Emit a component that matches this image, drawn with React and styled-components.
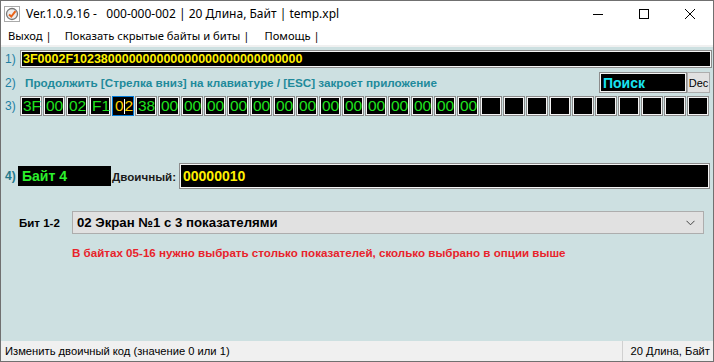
import React from 'react'
import styled, { createGlobalStyle } from 'styled-components'

const GlobalStyle = createGlobalStyle`
  html, body { margin: 0; padding: 0; background: #fff; }
  body { font-family: "Liberation Sans", Arial, sans-serif; }
  * { box-sizing: border-box; }
`

const Window = styled.div`
  width: 714px;
  height: 362px;
  border: 1px solid #707070;
  display: flex;
  flex-direction: column;
  background: #fff;
  overflow: hidden;
`

const TitleBar = styled.div`
  height: 25px;
  display: flex;
  align-items: center;
  background: #fff;
  font-family: "Noto Sans", "Open Sans", sans-serif;
  font-size: 12px;
  color: #000;
`

const AppIcon = styled.div`
  width: 16px;
  height: 16px;
  margin: 0 6px 0 3px;
  display: flex;
`

const Title = styled.div`
  flex: 1;
  white-space: pre;
`

const WinButton = styled.div`
  width: 46px;
  height: 25px;
  display: flex;
  align-items: center;
  justify-content: center;
`

const MenuBar = styled.div`
  height: 19px;
  display: flex;
  align-items: center;
  padding-left: 1px;
  font-family: "Noto Sans", "Open Sans", sans-serif;
  font-size: 11.2px;
`

const MenuItem = styled.div`
  padding: 0 ${p => p.$gap}px 0 6px;
  white-space: pre;
`

const Strip = styled.div`
  height: 2px;
  background: #f0f0f0;
`

const Client = styled.div`
  flex: 1;
  background: #cde0e1;
  display: flex;
  flex-direction: column;
  padding-left: 4px;
`

const Row = styled.div`
  display: flex;
  align-items: center;
  margin-top: ${p => p.$top}px;
  padding-right: ${p => p.$right ?? 3}px;
`

const Num = styled.div`
  width: ${p => p.$w || 15}px;
  flex: none;
  font-size: 12px;
  font-weight: ${p => (p.$bold ? 700 : 400)};
  color: ${p => p.$color || '#1d7fa3'};
`

const Sunken = styled.div`
  background: #000;
  border: 1px solid #8c8c8c;
  box-shadow: inset 0 0 0 1px #f4f4f4;
  display: flex;
  align-items: center;
`

const HexField = styled(Sunken)`
  flex: 1;
  height: 18px;
  padding-left: 2px;
  color: #fff000;
  font-weight: 700;
  font-size: 12.5px;
`

const Hint = styled.div`
  flex: 1;
  padding-left: 5px;
  color: #1f8a9b;
  font-weight: 700;
  font-size: 11.7px;
`

const SearchBox = styled(Sunken)`
  width: 88px;
  height: 21px;
  padding-left: 3px;
  color: #19e4f2;
  font-weight: 700;
  font-size: 14px;
`

const DecButton = styled.div`
  width: 23px;
  height: 21px;
  background: #e1e1e1;
  border: 1px solid #adadad;
  display: flex;
  align-items: center;
  justify-content: center;
  font-size: 11px;
  color: #000;
`

const ByteGrid = styled.div`
  flex: 1;
  display: grid;
  grid-template-columns: repeat(30, 22px);
  gap: 1px;
`

const ByteCell = styled(Sunken)`
  height: 20px;
  padding-left: 2px;
  font-family: "Liberation Sans Narrow", "Liberation Sans", sans-serif;
  font-size: 15.5px;
  color: ${p => (p.$focused ? '#ffd200' : '#1fe21f')};
  border-color: ${p => (p.$focused ? '#0078d7' : '#8c8c8c')};
  box-shadow: ${p => (p.$focused ? 'none' : 'inset 0 0 0 1px #f4f4f4')};
`

const Caret = styled.span`
  display: inline-block;
  width: 1px;
  height: 15px;
  background: #fff;
  vertical-align: middle;
`

const ByteTag = styled.div`
  width: 93px;
  height: 20px;
  background: #000;
  color: #2cf02c;
  font-weight: 700;
  font-size: 14px;
  padding-left: 4px;
  display: flex;
  align-items: center;
`

const FieldLabel = styled.div`
  width: 68px;
  padding-left: 1px;
  font-weight: 700;
  font-size: 11.6px;
  color: #1a1a1a;
`

const BinaryField = styled(Sunken)`
  flex: 1;
  height: 26px;
  padding-left: 3px;
  color: #fff000;
  font-weight: 700;
  font-size: 14px;
`

const BitLabel = styled.div`
  width: 67px;
  padding-left: 14px;
  font-weight: 700;
  font-size: 11.5px;
  white-space: nowrap;
  color: #000;
`

const Select = styled.div`
  flex: 1;
  height: 23px;
  background: #e1e1e1;
  border: 1px solid #adadad;
  display: flex;
  align-items: center;
  justify-content: space-between;
  padding: 0 8px 0 4px;
  font-weight: 700;
  font-size: 13.2px;
  color: #000;
`

const Warning = styled.div`
  margin-top: 12px;
  padding-left: 67px;
  color: #e8232b;
  font-weight: 700;
  font-size: 11.6px;
`

const StatusBar = styled.div`
  height: 20px;
  background: #f0f0f0;
  display: flex;
  align-items: center;
  font-size: 11.2px;
  color: #000;
`

const StatusText = styled.div`
  flex: 1;
  padding-left: 4px;
`

const StatusRight = styled.div`
  width: 91px;
  height: 100%;
  border-left: 1px solid #d0d0d0;
  display: flex;
  align-items: center;
  justify-content: flex-end;
  padding-right: 3px;
`

const bytes = ['3F', '00', '02', 'F1', '02', '38', ...Array(14).fill('00'), ...Array(10).fill('')]

const App = () => {
  return (
    <>
      <GlobalStyle />
      <Window>
        <TitleBar>
          <AppIcon>
            <svg width="16" height="16" viewBox="0 0 16 16">
              <rect x="0.5" y="0.5" width="15" height="15" fill="none" stroke="#555" strokeDasharray="1 1" />
              <circle cx="8" cy="8" r="5.5" fill="#eee" stroke="#777" strokeWidth="1.3" />
              <path d="M5 8.5 L7.3 10.6 L11.5 5.2" fill="none" stroke="#e8641c" strokeWidth="2" />
            </svg>
          </AppIcon>
          <Title>{'Ver.1.0.9.16 -   000-000-002 | 20 Длина, Байт | temp.xpl'}</Title>
          <WinButton>
            <svg width="10" height="10"><line x1="0" y1="5.5" x2="10" y2="5.5" stroke="#000" /></svg>
          </WinButton>
          <WinButton>
            <svg width="10" height="10"><rect x="0.5" y="0.5" width="9" height="9" fill="none" stroke="#000" /></svg>
          </WinButton>
          <WinButton>
            <svg width="10" height="10"><path d="M0 0 L10 10 M10 0 L0 10" stroke="#000" strokeWidth="1" /></svg>
          </WinButton>
        </TitleBar>
        <MenuBar>
          <MenuItem $gap={7}>Выход |</MenuItem>
          <MenuItem $gap={9}>Показать скрытые байты и биты |</MenuItem>
          <MenuItem $gap={6}>Помощь |</MenuItem>
        </MenuBar>
        <Strip />
        <Client>
          <Row $top={3} $right={1}>
            <Num>1)</Num>
            <HexField>{bytes.join('')}</HexField>
          </Row>
          <Row $top={4}>
            <Num>2)</Num>
            <Hint>Продолжить [Стрелка вниз] на клавиатуре / [ESC] закроет приложение</Hint>
            <SearchBox>Поиск</SearchBox>
            <DecButton>Dec</DecButton>
          </Row>
          <Row $top={3}>
            <Num>3)</Num>
            <ByteGrid>
              {bytes.map((b, i) =>
                i === 4 ? (
                  <ByteCell key={i} $focused>
                    0<Caret />2
                  </ByteCell>
                ) : (
                  <ByteCell key={i}>{b}</ByteCell>
                )
              )}
            </ByteGrid>
          </Row>
          <Row $top={47}>
            <Num $w={13} $bold $color="#23798b">4)</Num>
            <ByteTag>Байт 4</ByteTag>
            <FieldLabel>Двоичный:</FieldLabel>
            <BinaryField>00000010</BinaryField>
          </Row>
          <Row $top={22} $right={9}>
            <BitLabel>Бит 1-2</BitLabel>
            <Select>
              <span>02 Экран №1 с 3 показателями</span>
              <svg width="9" height="6" viewBox="0 0 9 6">
                <path d="M0.5 0.8 L4.5 4.8 L8.5 0.8" fill="none" stroke="#444" strokeWidth="1" />
              </svg>
            </Select>
          </Row>
          <Warning>В байтах 05-16 нужно выбрать столько показателей, сколько выбрано в опции выше</Warning>
        </Client>
        <StatusBar>
          <StatusText>Изменить двоичный код (значение 0 или 1)</StatusText>
          <StatusRight>20 Длина, Байт</StatusRight>
        </StatusBar>
      </Window>
    </>
  )
}

export default App
